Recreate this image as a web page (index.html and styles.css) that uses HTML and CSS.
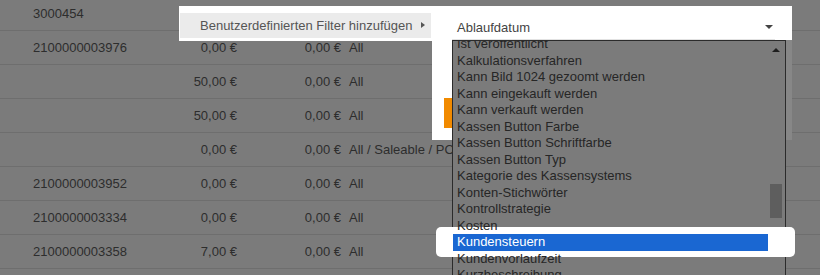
FILE: index.html
```html
<!DOCTYPE html>
<html lang="de">
<head>
  <meta charset="UTF-8">
  <title>Artikel - Filter</title>
  <meta name="viewport" content="width=device-width, initial-scale=1">
  <link rel="stylesheet" href="styles.css">
</head>
<body>
  <div class="grid">
    <div class="row"><span class="sku">3000454</span><span class="num"></span><span class="num"></span><span class="chan"></span></div>
    <div class="row"><span class="sku">2100000003976</span><span class="num">0,00 €</span><span class="num">0,00 €</span><span class="chan">All</span></div>
    <div class="row"><span class="sku"></span><span class="num">50,00 €</span><span class="num">0,00 €</span><span class="chan">All</span></div>
    <div class="row"><span class="sku"></span><span class="num">50,00 €</span><span class="num">0,00 €</span><span class="chan">All</span></div>
    <div class="row"><span class="sku"></span><span class="num">0,00 €</span><span class="num">0,00 €</span><span class="chan">All / Saleable / POS</span></div>
    <div class="row"><span class="sku">2100000003952</span><span class="num">0,00 €</span><span class="num">0,00 €</span><span class="chan">All</span></div>
    <div class="row"><span class="sku">2100000003334</span><span class="num">0,00 €</span><span class="num">0,00 €</span><span class="chan">All</span></div>
    <div class="row"><span class="sku">2100000003358</span><span class="num">7,00 €</span><span class="num">0,00 €</span><span class="chan">All</span></div>
  </div>

  <div class="ctx-menu">
    <div class="ctx-item">Benutzerdefinierten Filter hinzufügen<span class="caret-right"></span></div>
  </div>

  <div class="filter-panel">
    <div class="field">
      <div class="select">Ablaufdatum<span class="caret-down"></span></div>
    </div>
    <div class="panel-body">
      <button class="btn-apply" aria-label="Anwenden"></button>
    </div>
  </div>

  <div class="dropdown">
    <div class="spot"></div>
    <ul class="options">
      <li>Ist veröffentlicht</li>
      <li>Kalkulationsverfahren</li>
      <li>Kann Bild 1024 gezoomt werden</li>
      <li>Kann eingekauft werden</li>
      <li>Kann verkauft werden</li>
      <li>Kassen Button Farbe</li>
      <li>Kassen Button Schriftfarbe</li>
      <li>Kassen Button Typ</li>
      <li>Kategorie des Kassensystems</li>
      <li>Konten-Stichwörter</li>
      <li>Kontrollstrategie</li>
      <li>Kosten</li>
      <li class="selected">Kundensteuern</li>
      <li>Kundenvorlaufzeit</li>
      <li>Kurzbeschreibung</li>
    </ul>
    <div class="scrollbar">
      <span class="scroll-up"></span>
      <span class="thumb"></span>
    </div>
  </div>
</body>
</html>
```

FILE: styles.css
```css
html {
  overflow: hidden;
}
body {
  margin: 0;
  height: 275px;
  overflow: hidden;
  position: relative;
  background: #7b7b7b;
  font-family: "Liberation Sans", Arial, sans-serif;
  font-size: 13px;
  color: #2d2d2d;
}
.grid {
  margin-top: -3px;
}
.row {
  display: grid;
  grid-template-columns: 160px 77px 104px 1fr;
  align-items: center;
  height: 33px;
  border-bottom: 1px solid #6e6e6e;
  white-space: nowrap;
}
.sku {
  padding-left: 33px;
}
.num {
  text-align: right;
}
.chan {
  padding-left: 8px;
}

/* context menu */
.ctx-menu {
  position: absolute;
  left: 179px;
  top: 6px;
  width: 253px;
  height: 35px;
  box-sizing: border-box;
  padding-top: 7px;
  background: #fff;
}
.ctx-item {
  position: relative;
  margin: 0 1px;
  height: 25px;
  line-height: 25px;
  padding-left: 20px;
  background: #ebebeb;
  color: #555;
}
.caret-right {
  position: absolute;
  left: 241px;
  top: 9px;
  border-left: 4px solid #555;
  border-top: 3px solid transparent;
  border-bottom: 3px solid transparent;
}

/* filter panel */
.filter-panel {
  position: absolute;
  left: 432px;
  top: 6px;
  width: 360px;
  height: 134px;
  display: flex;
  flex-direction: column;
  background: #fff;
}
.field {
  height: 34px;
  padding: 0 17px 0 20px;
}
.select {
  display: flex;
  justify-content: space-between;
  align-items: center;
  box-sizing: border-box;
  height: 34px;
  padding: 9px 2px 0 5px;
  border-bottom: 1px solid #e2e2e2;
  color: #444;
}
.caret-down {
  border-top: 4px solid #444;
  border-left: 4px solid transparent;
  border-right: 4px solid transparent;
}
.panel-body {
  flex: 1;
  background: linear-gradient(to right, #fff 353px, #878787 353px);
}
.btn-apply {
  display: block;
  margin: 58px 0 0 12px;
  width: 90px;
  height: 30px;
  border: none;
  background: #f18a00;
}

/* open select list */
.dropdown {
  position: absolute;
  left: 452px;
  top: 40px;
  width: 334px;
  height: 235px;
  box-sizing: border-box;
  display: flex;
  border: 1px solid #2b2b2b;
  border-bottom: none;
  background: #7b7b7b;
  z-index: 2;
}
.spot {
  position: absolute;
  left: -17px;
  top: 186px;
  width: 359px;
  height: 30px;
  border-radius: 5px;
  background: #fff;
  z-index: -1;
}
.options {
  list-style: none;
  margin: 0;
  padding: 0;
  width: 315px;
  height: 100%;
  overflow: hidden;
}
.options li {
  height: 16.5px;
  line-height: 16.5px;
  padding-left: 4px;
  white-space: nowrap;
  color: #262626;
}
.options li:first-child {
  margin-top: -5px;
}
.options li.selected {
  background: #1a67d2;
  color: #fff;
}
.scrollbar {
  flex: 1;
  position: relative;
}
.scroll-up {
  position: absolute;
  left: 4px;
  top: 7px;
  border-bottom: 4px solid #1e1e1e;
  border-left: 4px solid transparent;
  border-right: 4px solid transparent;
}
.thumb {
  position: absolute;
  left: 2px;
  top: 143px;
  width: 12px;
  height: 34px;
  background: #5e5e5e;
}
```
